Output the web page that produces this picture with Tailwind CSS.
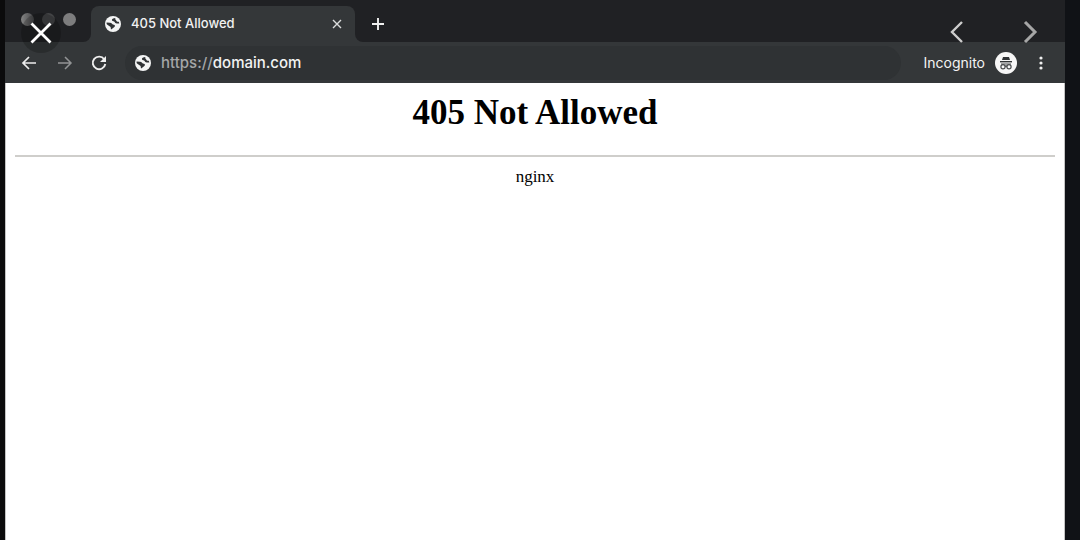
<!DOCTYPE html>
<html lang="en">
<head>
  <meta charset="UTF-8">
  <meta name="viewport" content="width=device-width, initial-scale=1.0">
  <title>405 Not Allowed</title>
  <script src="https://cdn.jsdelivr.net/npm/@tailwindcss/browser@4"></script>
</head>
<body class="bg-[#101216] font-['Inter',sans-serif]">
  <!-- Shared icons -->
  <svg class="hidden" aria-hidden="true">
    <symbol id="globe" viewBox="0 0 16 16">
      <circle cx="8" cy="8" r="8" fill="#f4f5f5"/>
      <path d="M1.6 6.6L5 6.8C7 7 7 8.6 9 8.8C10.4 9.2 10.2 11 8.8 11.4C7.6 11.8 7.4 13 6 13.4L5.6 11C4.4 9.6 2.4 9.4 1.6 8Z" fill="#303335"/>
      <path d="M10.4 2C8.4 2.2 6.4 3 7 4.6C7.6 5.6 9.2 5 9.8 6.2C10.4 7.6 12.4 7.6 14.3 7.4L13.8 5.8C12.4 6 11.6 5.4 11.2 4.4C10.8 3.6 9.8 3.4 10.4 2Z" fill="#303335"/>
    </symbol>
  </svg>

  <div class="relative flex min-h-screen flex-col border-l-[5px] border-l-[#0b0b0c] mr-[15px]">
    <!-- Tab strip -->
    <header class="flex h-[42px] bg-[#343739] text-white">
      <div class="flex w-[86px] items-center gap-2 rounded-br-lg bg-[#202124] pb-1 pl-4">
        <span class="h-[13px] w-[13px] rounded-full bg-linear-to-r from-[#858585] to-[#454648]"></span>
        <span class="h-[13px] w-[13px] rounded-full bg-[#434446]"></span>
        <span class="h-[13px] w-[13px] rounded-full bg-[#7d7d7e]"></span>
      </div>
      <div class="w-[264px] bg-[#202124] pt-[6px]">
        <div class="flex h-9 items-center rounded-t-lg bg-[#343739] pr-3 pl-[14px]">
          <svg class="h-4 w-4"><use href="#globe"/></svg>
          <span class="ml-[10px] flex-1 text-[13px] font-medium text-[#f1f1f1]">405 Not Allowed</span>
          <button type="button" aria-label="Close tab">
            <svg class="h-3 w-3" viewBox="0 0 12 12" fill="none" stroke="#dcdddd" stroke-width="1.4"><path d="M2 2l8 8M10 2l-8 8"/></svg>
          </button>
        </div>
      </div>
      <div class="flex flex-1 items-center rounded-bl-lg bg-[#202124] pt-[6px] pl-4">
        <button type="button" aria-label="New tab">
          <svg class="h-[14px] w-[14px]" viewBox="0 0 14 14" fill="none" stroke="#f0f0f0" stroke-width="1.9"><path d="M7 1v12M1 7h12"/></svg>
        </button>
      </div>
    </header>

    <!-- Toolbar -->
    <div class="flex h-[41px] items-center bg-[#343739] pr-[18px] pl-4 text-white">
      <button type="button" aria-label="Back">
        <svg class="h-4 w-4" viewBox="0 0 16 16" fill="none" stroke="#ededed" stroke-width="1.7"><path d="M15 8H2M8 2L2 8l6 6"/></svg>
      </button>
      <button type="button" aria-label="Forward" class="ml-5">
        <svg class="h-4 w-4" viewBox="0 0 16 16" fill="none" stroke="#929495" stroke-width="1.5"><path d="M1 8h13M8 2l6 6-6 6"/></svg>
      </button>
      <button type="button" aria-label="Reload" class="ml-[18px]">
        <svg class="h-4 w-4" viewBox="0 0 16 16" fill="none" stroke="#efefef" stroke-width="1.9"><path d="M13.2 4.2A6.3 6.3 0 1 0 14.3 9"/><path d="M15 1v6H9z" fill="#efefef" stroke="none"/></svg>
      </button>
      <label class="ml-[18px] flex h-[34px] flex-1 items-center rounded-full bg-[#2f3234] pl-[10px]">
        <svg class="h-4 w-4"><use href="#globe"/></svg>
        <span class="relative ml-[10px] flex-1 text-[15px] leading-6 font-medium">
          <input type="text" aria-label="Address" value="https://domain.com" class="block w-full text-transparent outline-none">
          <span class="pointer-events-none absolute inset-0 text-[#a4a6a7]" aria-hidden="true">https://<span class="text-[#f2f2f2]">domain.com</span></span>
        </span>
      </label>
      <span class="ml-[22px] text-sm text-[#f4f4f4]">Incognito</span>
      <svg class="ml-[10px] h-[22px] w-[22px]" viewBox="0 0 22 22">
        <circle cx="11" cy="11" r="11" fill="#f7f7f7"/>
        <path d="M8 5h6l1 3H7z" fill="#303335"/>
        <path d="M5 9.7h12" stroke="#303335" stroke-width="1.4"/>
        <path d="M6 12h10M10 14.5c.6-.6 1.4-.6 2 0" fill="none" stroke="#4a4d4f" stroke-width="1.2"/>
        <circle cx="8" cy="14.7" r="2.1" fill="none" stroke="#4a4d4f" stroke-width="1.2"/>
        <circle cx="14" cy="14.7" r="2.1" fill="none" stroke="#4a4d4f" stroke-width="1.2"/>
      </svg>
      <button type="button" aria-label="Menu" class="ml-[18px]">
        <svg class="h-4 w-3" viewBox="0 0 12 16" fill="#f0f0f0"><circle cx="6" cy="3" r="1.6"/><circle cx="6" cy="8" r="1.6"/><circle cx="6" cy="13" r="1.6"/></svg>
      </button>
    </div>

    <!-- Page -->
    <main class="flex-1 border-x border-[#c4c4c4] bg-white px-[9px] pt-[9px] text-center font-['Liberation_Serif',serif] text-black">
      <h1 class="text-[35px] leading-[42px] font-bold">405 Not Allowed</h1>
      <hr class="mt-[21px] border-t-2 border-[#cfcecb]">
      <p class="mt-2 text-[17px] leading-6">nginx</p>
    </main>

    <!-- Viewer controls -->
    <button type="button" aria-label="Close" class="absolute top-[13px] left-4 rounded-full bg-black/20 p-2">
      <svg class="h-6 w-6" viewBox="0 0 24 24" fill="none" stroke="#ffffff" stroke-width="2.8"><path d="M2.5 2.5l19 19M21.5 2.5l-19 19"/></svg>
    </button>
    <button type="button" aria-label="Previous" class="absolute top-5 right-24">
      <svg class="h-6 w-6" viewBox="0 0 24 24" fill="none" stroke="#cdcdcd" stroke-width="2.4"><path d="M17 2L7 12l10 10"/></svg>
    </button>
    <button type="button" aria-label="Next" class="absolute top-5 right-6">
      <svg class="h-6 w-6" viewBox="0 0 24 24" fill="none" stroke="#a6a6a6" stroke-width="3"><path d="M8 2l10 10L8 22"/></svg>
    </button>
  </div>
</body>
</html>
